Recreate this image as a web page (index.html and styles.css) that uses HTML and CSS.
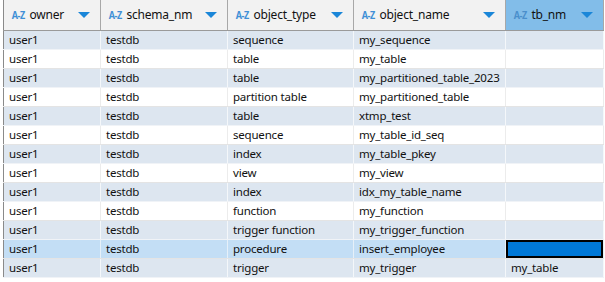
FILE: index.html
```html
<!DOCTYPE html>
<html lang="en">
<head>
  <meta charset="UTF-8" />
  <title>Objects</title>
  <link rel="stylesheet" href="styles.css">
</head>
<body>
  <div class="grid">
    <table class="data">
      <colgroup>
        <col class="c1"><col class="c2"><col class="c3"><col class="c4"><col class="c5">
      </colgroup>
      <thead>
        <tr>
          <th><div class="hd"><span class="az">A-Z</span><span class="name">owner</span><span class="tri"></span></div></th>
          <th><div class="hd"><span class="az">A-Z</span><span class="name">schema_nm</span><span class="tri"></span></div></th>
          <th><div class="hd"><span class="az">A-Z</span><span class="name">object_type</span><span class="tri"></span></div></th>
          <th><div class="hd"><span class="az">A-Z</span><span class="name">object_name</span><span class="tri"></span></div></th>
          <th class="sel"><div class="hd"><span class="az">A-Z</span><span class="name">tb_nm</span><span class="tri"></span></div></th>
        </tr>
      </thead>
      <tbody>
        <tr class="alt"><td>user1</td><td>testdb</td><td>sequence</td><td>my_sequence</td><td></td></tr>
        <tr><td>user1</td><td>testdb</td><td>table</td><td>my_table</td><td></td></tr>
        <tr class="alt"><td>user1</td><td>testdb</td><td>table</td><td>my_partitioned_table_2023</td><td></td></tr>
        <tr><td>user1</td><td>testdb</td><td>partition table</td><td>my_partitioned_table</td><td></td></tr>
        <tr class="alt"><td>user1</td><td>testdb</td><td>table</td><td>xtmp_test</td><td></td></tr>
        <tr><td>user1</td><td>testdb</td><td>sequence</td><td>my_table_id_seq</td><td></td></tr>
        <tr class="alt"><td>user1</td><td>testdb</td><td>index</td><td>my_table_pkey</td><td></td></tr>
        <tr><td>user1</td><td>testdb</td><td>view</td><td>my_view</td><td></td></tr>
        <tr class="alt"><td>user1</td><td>testdb</td><td>index</td><td>idx_my_table_name</td><td></td></tr>
        <tr><td>user1</td><td>testdb</td><td>function</td><td>my_function</td><td></td></tr>
        <tr class="alt"><td>user1</td><td>testdb</td><td>trigger function</td><td>my_trigger_function</td><td></td></tr>
        <tr class="cur"><td>user1</td><td>testdb</td><td>procedure</td><td>insert_employee</td><td class="focus"></td></tr>
        <tr class="alt"><td>user1</td><td>testdb</td><td>trigger</td><td>my_trigger</td><td>my_table</td></tr>
      </tbody>
    </table>
  </div>
</body>
</html>
```

FILE: styles.css
```css
* { box-sizing: border-box; }

body {
  margin: 0;
  background: #ffffff;
  font-family: "Noto Sans", "Open Sans", sans-serif;
  font-size: 11.5px;
  letter-spacing: -0.2px;
  color: #111;
}

.grid {
  width: 605px;
  height: 282px;
  padding-left: 3px;
  overflow: hidden;
}

.data {
  border-collapse: collapse;
  table-layout: fixed;
  width: 600px;
  border-left: 1px solid #8a8a8a;
}

.c1 { width: 97px; }
.c2 { width: 127px; }
.c3 { width: 126px; }
.c4 { width: 152px; }
.c5 { width: 98px; }

th {
  height: 30px;
  padding: 0;
  background: #f2f2f2;
  border-right: 1px solid #a8a8a8;
  border-bottom: 1px solid #9a9a9a;
  font-weight: normal;
  text-align: left;
}

th.sel { background: #82bde9; }

.hd {
  display: flex;
  align-items: center;
  padding: 0 10px 0 7px;
}

.az {
  font-size: 10px;
  font-weight: bold;
  color: #3f8fd6;
  letter-spacing: -0.5px;
  margin-right: 4px;
  transform: scaleX(0.9);
}

.sel .az { color: #4a8fcc; }

.name {
  flex: 1;
  font-size: 12px;
  color: #111;
}

.tri {
  width: 0;
  height: 0;
  border-left: 6px solid transparent;
  border-right: 6px solid transparent;
  border-top: 6px solid #1a86d8;
}

td {
  height: 19px;
  padding: 0 0 0 5px;
  border-right: 1px solid #ececec;
  border-bottom: 1px solid #e4e4e4;
  white-space: nowrap;
  overflow: hidden;
  line-height: 17px;
}

tr.alt td {
  background: #dde6f0;
  border-right-color: #f4f7fa;
  border-bottom-color: #f0f3f7;
}

tr.cur td {
  background: #c3def5;
  border-right-color: #e6f0f9;
}

td.focus {
  background: #0078d7 !important;
  box-shadow: inset 0 0 0 2px #000;
}
```
